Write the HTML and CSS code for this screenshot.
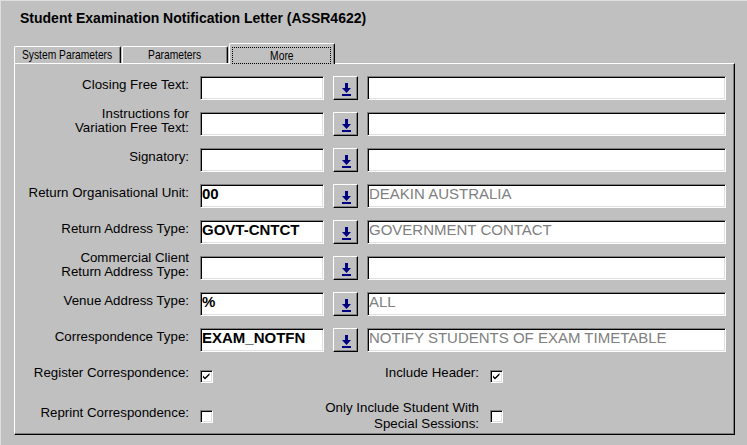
FILE: index.html
```html
<!DOCTYPE html>
<html>
<head>
<meta charset="utf-8">
<link rel="stylesheet" href="styles.css">
</head>
<body>
<div class="window">
  <h1 class="title">Student Examination Notification Letter (ASSR4622)</h1>
  <div class="tabs">
    <div class="tab tab-first"><span class="tab-text">System Parameters</span></div>
    <div class="tab"><span class="tab-text">Parameters</span></div>
    <div class="tab active"><span class="focus"><span class="tab-text">More</span></span></div>
  </div>
  <div class="panel">
    <div class="form">
      <div class="label">Closing Free Text:</div>
      <div class="field"></div>
      <button class="lookup"><svg width="11" height="13" viewBox="0 0 11 13"><path d="M4 0h3v5h3l-4.5 5l-4.5-5h3z" fill="#000080"/><rect x="1" y="11" width="9" height="2" fill="#000080"/></svg></button>
      <div class="field desc"></div>

      <div class="label">Instructions for<br>Variation Free Text:</div>
      <div class="field"></div>
      <button class="lookup"><svg width="11" height="13" viewBox="0 0 11 13"><path d="M4 0h3v5h3l-4.5 5l-4.5-5h3z" fill="#000080"/><rect x="1" y="11" width="9" height="2" fill="#000080"/></svg></button>
      <div class="field desc"></div>

      <div class="label">Signatory:</div>
      <div class="field"></div>
      <button class="lookup"><svg width="11" height="13" viewBox="0 0 11 13"><path d="M4 0h3v5h3l-4.5 5l-4.5-5h3z" fill="#000080"/><rect x="1" y="11" width="9" height="2" fill="#000080"/></svg></button>
      <div class="field desc"></div>

      <div class="label">Return Organisational Unit:</div>
      <div class="field">00</div>
      <button class="lookup"><svg width="11" height="13" viewBox="0 0 11 13"><path d="M4 0h3v5h3l-4.5 5l-4.5-5h3z" fill="#000080"/><rect x="1" y="11" width="9" height="2" fill="#000080"/></svg></button>
      <div class="field desc">DEAKIN AUSTRALIA</div>

      <div class="label">Return Address Type:</div>
      <div class="field">GOVT-CNTCT</div>
      <button class="lookup"><svg width="11" height="13" viewBox="0 0 11 13"><path d="M4 0h3v5h3l-4.5 5l-4.5-5h3z" fill="#000080"/><rect x="1" y="11" width="9" height="2" fill="#000080"/></svg></button>
      <div class="field desc">GOVERNMENT CONTACT</div>

      <div class="label">Commercial Client<br>Return Address Type:</div>
      <div class="field"></div>
      <button class="lookup"><svg width="11" height="13" viewBox="0 0 11 13"><path d="M4 0h3v5h3l-4.5 5l-4.5-5h3z" fill="#000080"/><rect x="1" y="11" width="9" height="2" fill="#000080"/></svg></button>
      <div class="field desc"></div>

      <div class="label">Venue Address Type:</div>
      <div class="field">%</div>
      <button class="lookup"><svg width="11" height="13" viewBox="0 0 11 13"><path d="M4 0h3v5h3l-4.5 5l-4.5-5h3z" fill="#000080"/><rect x="1" y="11" width="9" height="2" fill="#000080"/></svg></button>
      <div class="field desc">ALL</div>

      <div class="label">Correspondence Type:</div>
      <div class="field">EXAM_NOTFN</div>
      <button class="lookup"><svg width="11" height="13" viewBox="0 0 11 13"><path d="M4 0h3v5h3l-4.5 5l-4.5-5h3z" fill="#000080"/><rect x="1" y="11" width="9" height="2" fill="#000080"/></svg></button>
      <div class="field desc">NOTIFY STUDENTS OF EXAM TIMETABLE</div>

      <div class="checkrow">
        <div class="label">Register Correspondence:</div>
        <div class="check"><svg width="9" height="9" viewBox="0 0 9 9"><path d="M1 3.5l2 2l4.5-4.5v2l-4.5 4.5l-2-2z" fill="#000"/></svg></div>
        <div class="label">Include Header:</div>
        <div class="check"><svg width="9" height="9" viewBox="0 0 9 9"><path d="M1 3.5l2 2l4.5-4.5v2l-4.5 4.5l-2-2z" fill="#000"/></svg></div>
      </div>

      <div class="checkrow">
        <div class="label">Reprint Correspondence:</div>
        <div class="check"></div>
        <div class="label label-top">Only Include Student With<br>Special Sessions:</div>
        <div class="check"></div>
      </div>
    </div>
  </div>
</div>
</body>
</html>
```
FILE: styles.css
```css
html, body {
  margin: 0;
  padding: 0;
  background: #c0c0c0;
}
.window {
  width: 747px;
  height: 445px;
  box-sizing: border-box;
  border-top: 1px solid #dfdfdf;
  border-left: 1px solid #dfdfdf;
  font-family: "Liberation Sans", Arial, sans-serif;
  color: #000;
}
.title {
  margin: 0;
  padding: 9px 0 0 19px;
  font: bold 14px/16px "Liberation Sans", Arial, sans-serif;
}
.tabs {
  display: flex;
  align-items: flex-end;
  height: 20px;
  margin: 17px 0 0 13px;
}
.tab {
  box-sizing: border-box;
  width: 106px;
  height: 17px;
  margin-right: 1px;
  border-top: 1px solid #fff;
  border-left: 1px solid #fff;
  border-right: 1px solid #000;
  border-radius: 2px 2px 0 0;
  box-shadow: inset -1px 0 #808080;
  background: #c0c0c0;
  display: flex;
  justify-content: center;
  font: 13px/15px "Liberation Sans", Arial, sans-serif;
  white-space: nowrap;
}
.tab-text {
  display: inline-block;
  transform: scaleX(0.79);
}
.tab-first {
  width: 107px;
}
.tab.active {
  position: relative;
  height: 21px;
  margin-bottom: -1px;
  padding: 3px 3px 0 2px;
}
.focus {
  display: flex;
  justify-content: center;
  flex: 1;
  height: 17px;
  box-sizing: border-box;
  border: 1px dotted #000;
}
.panel {
  width: 721px;
  height: 372px;
  box-sizing: border-box;
  margin-left: 13px;
  border: 1px solid;
  border-color: #fff #000 #000 #fff;
  box-shadow: inset -1px -1px #808080;
}
.form {
  display: grid;
  grid-template-columns: 176px 124px 25px 359px;
  grid-auto-rows: 24px;
  column-gap: 9px;
  row-gap: 12px;
  padding-top: 12px;
}
.label {
  align-self: center;
  margin-bottom: 7px;
  padding-right: 2px;
  text-align: right;
  font-size: 13.3px;
  line-height: 14px;
  white-space: nowrap;
}
.label-top {
  align-self: start;
  margin-bottom: 0;
  line-height: 16px;
}
.field {
  box-sizing: border-box;
  height: 24px;
  border: 1px solid;
  border-color: #808080 #fff #fff #808080;
  box-shadow: inset 1px 1px #000, inset -1px -1px #dfdfdf;
  background: #fff;
  padding: 0 1px;
  font: bold 15px/17px "Liberation Sans", Arial, sans-serif;
  white-space: nowrap;
  overflow: hidden;
}
.field.desc {
  font-weight: normal;
  color: #808080;
}
.lookup {
  box-sizing: border-box;
  width: 25px;
  height: 24px;
  margin: 0;
  padding: 2px 0 0 1px;
  border: 1px solid;
  border-color: #fff #000 #000 #fff;
  box-shadow: inset -1px -1px #808080;
  background: #c0c0c0;
  display: flex;
  align-items: center;
  justify-content: center;
}
.checkrow {
  grid-column: 1 / -1;
  display: grid;
  grid-template-columns: 176px 13px 259px 13px;
  column-gap: 9px;
  align-items: center;
}
.check {
  box-sizing: border-box;
  width: 13px;
  height: 13px;
  border: 1px solid;
  border-color: #808080 #fff #fff #808080;
  box-shadow: inset 1px 1px #000, inset -1px -1px #dfdfdf;
  background: #fff;
  display: flex;
  align-items: center;
  justify-content: center;
}
```
